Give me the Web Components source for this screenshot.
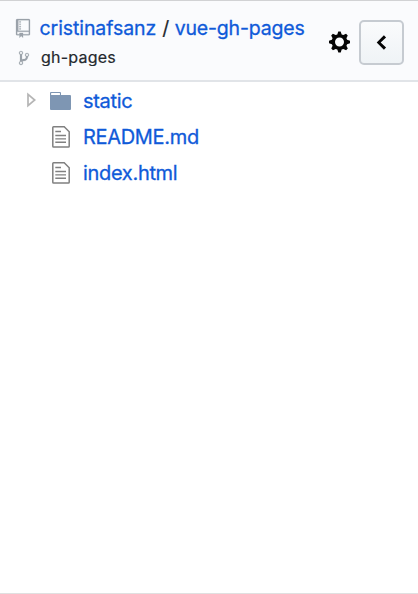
<!DOCTYPE html>
<html lang="en"><head><meta charset="utf-8"><title>File tree</title>
<style>html,body{margin:0;height:100%;overflow:hidden;background:#fff}</style></head>
<body>
<tree-panel>
  <repo-header slot="header">
    <tree-link slot="owner" style="--track:-.08px">cristinafsanz</tree-link>
    <tree-link slot="repo" style="--track:-.17px">vue-gh-pages</tree-link>
    <span slot="branch">gh-pages</span>
  </repo-header>
  <tree-item kind="folder">static</tree-item>
  <tree-item kind="file">README.md</tree-item>
  <tree-item kind="file">index.html</tree-item>
</tree-panel>
<script>
const icons = {
  repo: ['0 0 12 16', '<path stroke="currentColor" stroke-width=".2" d="M4 9H3V8h1v1zm0-3H3v1h1V6zm0-2H3v1h1V4zm0-2H3v1h1V2zm8-1v12c0 .55-.45 1-1 1H6v2l-1.5-1.5L3 16v-2H1c-.55 0-1-.45-1-1V1c0-.55.45-1 1-1h10c.55 0 1 .45 1 1zm-1 10H1v2h2v-1h3v1h5v-2zm0-10H2v9h9V1z"/>'],
  branch: ['0 0 10 16', '<path stroke="currentColor" stroke-width=".2" d="M10 5c0-1.11-.89-2-2-2a1.993 1.993 0 0 0-1 3.72v.3c-.02.52-.23.98-.63 1.38-.4.4-.86.61-1.38.63-.83.02-1.48.16-2 .45V4.72a1.993 1.993 0 0 0-1-3.72C.88 1 0 1.89 0 3a2 2 0 0 0 1 1.72v6.56c-.59.35-1 .99-1 1.72 0 1.11.89 2 2 2 1.11 0 2-.89 2-2 0-.53-.2-1-.53-1.36.09-.06.48-.41.59-.47.25-.11.56-.17.94-.17 1.05-.05 1.95-.45 2.75-1.25S8.95 7.77 9 6.73h-.02C9.59 6.37 10 5.73 10 5zM2 1.8c.66 0 1.2.55 1.2 1.2 0 .65-.55 1.2-1.2 1.2C1.35 4.2.8 3.65.8 3c0-.65.55-1.2 1.2-1.2zm0 12.41c-.66 0-1.2-.55-1.2-1.2 0-.65.55-1.2 1.2-1.2.65 0 1.2.55 1.2 1.2 0 .65-.55 1.2-1.2 1.2zm6-8c-.66 0-1.2-.55-1.2-1.2 0-.65.55-1.2 1.2-1.2.65 0 1.2.55 1.2 1.2 0 .65-.55 1.2-1.2 1.2z"/>'],
  gear: ['0 0 14 16', '<path d="M14 8.77v-1.6l-1.94-.64-.45-1.09.88-1.84-1.13-1.13-1.81.91-1.09-.45-.69-1.92h-1.6l-.63 1.94-1.11.45-1.84-.88-1.13 1.13.91 1.81-.45 1.09L0 7.23v1.59l1.94.64.45 1.09-.88 1.84 1.13 1.13 1.81-.91 1.09.45.69 1.92h1.59l.63-1.94 1.11-.45 1.84.88 1.13-1.13-.92-1.81.47-1.09L14 8.75v.02zM7 11c-1.66 0-3-1.34-3-3s1.34-3 3-3 3 1.34 3 3-1.34 3-3 3z"/>'],
  chevron: ['0 0 8 16', '<path d="M5.5 3L7 4.5 3.25 8 7 11.5 5.5 13l-5-5 5-5z"/>'],
  folder: ['0 0 21 18', '<path fill-rule="evenodd" d="M1 0h9q1 0 1 1v2h9q1 0 1 1v13q0 1-1 1H1q-1 0-1-1V1q0-1 1-1zm.4 1.200V3h8.300V1.200z"/><path fill="#fff" d="M1.300 1h8.500v2h-8.500z"/>'],
  file: ['0 0 18 22', '<path fill="none" stroke="currentColor" stroke-width="1.500" d="M1.500.8h10.700l5 5v14.400q0 .8-.8.800H1.600q-.8 0-.8-.8V1.600q0-.8.700-.8z"/><path fill="none" stroke="currentColor" stroke-width="1.400" d="M3.300 5.500h5.700M3.300 9.500h10.700M3.300 12.900h10.700M3.300 16.300h10.700"/>'],
  arrow: ['0 0 9 14', '<path fill="none" stroke="currentColor" stroke-width="1.700" d="M1 1.300v11.400L7.700 7z"/>']
};
class BaseElement extends HTMLElement {
  constructor(){ super(); this.attachShadow({mode:'open'}); }
  connectedCallback(){ this.shadowRoot.innerHTML = this.view(); }
}
customElements.define('tree-icon', class extends BaseElement {
  view(){ const [box, shape] = icons[this.getAttribute('name')];
    return `<style>:host{display:block;flex:none}svg{display:block;width:100%;height:100%;overflow:visible;fill:currentColor}</style><svg viewBox="${box}" aria-hidden="true">${shape}</svg>`; }
});
customElements.define('tree-link', class extends BaseElement {
  view(){ return `<style>:host{display:block;color:#0f5ad9;letter-spacing:var(--track,0);-webkit-text-stroke:.3px #0f5ad9}</style><slot></slot>`; }
});
customElements.define('repo-header', class extends BaseElement {
  view(){ return `<style>
:host{box-sizing:border-box;display:flex;height:82px;padding:0 14px 0 16px;background:#fafbfd;border-top:1px solid #d1d2d4;border-bottom:2px solid #e1e4e8}
.names{flex:1;padding-top:14px}
.row{display:flex;align-items:center;white-space:nowrap}
.title{height:26px;font-size:19.500px;line-height:26px}
.title tree-icon{width:14px;height:18.700px;margin-right:9.500px}
.sep{margin:0 5.500px 0 6px;-webkit-text-stroke:.2px}
.branch{height:24px;padding-left:3px}
.branch tree-icon{width:10px;height:16px;margin:9px 12px 0 0}
.branch span{height:17px;overflow:hidden;font-size:16px;line-height:17px;margin-top:8px;letter-spacing:.22px;-webkit-text-stroke:.2px}
tree-icon{color:#9ba2aa}
.actions{display:flex;align-items:center;gap:9px;height:82px}
.actions tree-icon{color:#050505}
.gear{width:21px;height:24px}
button{box-sizing:border-box;display:grid;place-items:center;width:45px;height:45px;padding:0;border:2px solid #c6cbd1;border-radius:5px;background:linear-gradient(#fafbfc,#eff3f6)}
button tree-icon{width:11.500px;height:23px}
</style>
<div class="names"><div class="row title"><tree-icon name="repo"></tree-icon><slot name="owner"></slot><span class="sep">/</span><slot name="repo"></slot></div>
<div class="row branch"><tree-icon name="branch"></tree-icon><span><slot name="branch"></slot></span></div></div>
<div class="actions"><tree-icon class="gear" name="gear"></tree-icon><button aria-label="Collapse"><tree-icon name="chevron"></tree-icon></button></div>`; }
});
customElements.define('tree-item', class extends BaseElement {
  view(){ const k = this.getAttribute('kind'); return `<style>
:host{display:grid;grid-template-columns:24px 33px auto;align-items:center;height:36px;padding-left:26px;font-size:20px;line-height:36px}
.arrow{width:9px;height:14px;color:#b5b5b5;margin:-2px 0 0 1px}
.folder{width:21px;height:18px;color:#7e96b3}
.file{width:18px;height:22px;margin-left:2px;color:#808080}
tree-link{--track:-.32px}
</style>${k==='folder'?'<tree-icon class="arrow" name="arrow"></tree-icon>':'<span></span>'}<tree-icon class="${k}" name="${k}"></tree-icon><tree-link><slot></slot></tree-link>`; }
});
customElements.define('tree-panel', class extends BaseElement {
  view(){ return `<style>
:host{box-sizing:border-box;display:flex;flex-direction:column;height:100%;border-bottom:1px solid #e0e0e0;background:#fff;color:#24292e;font-family:Inter,"Liberation Sans",sans-serif}
.list{display:flex;flex-direction:column;padding-top:1px}
</style><slot name="header"></slot><div class="list"><slot></slot></div>`; }
});
</script>
</body></html>
